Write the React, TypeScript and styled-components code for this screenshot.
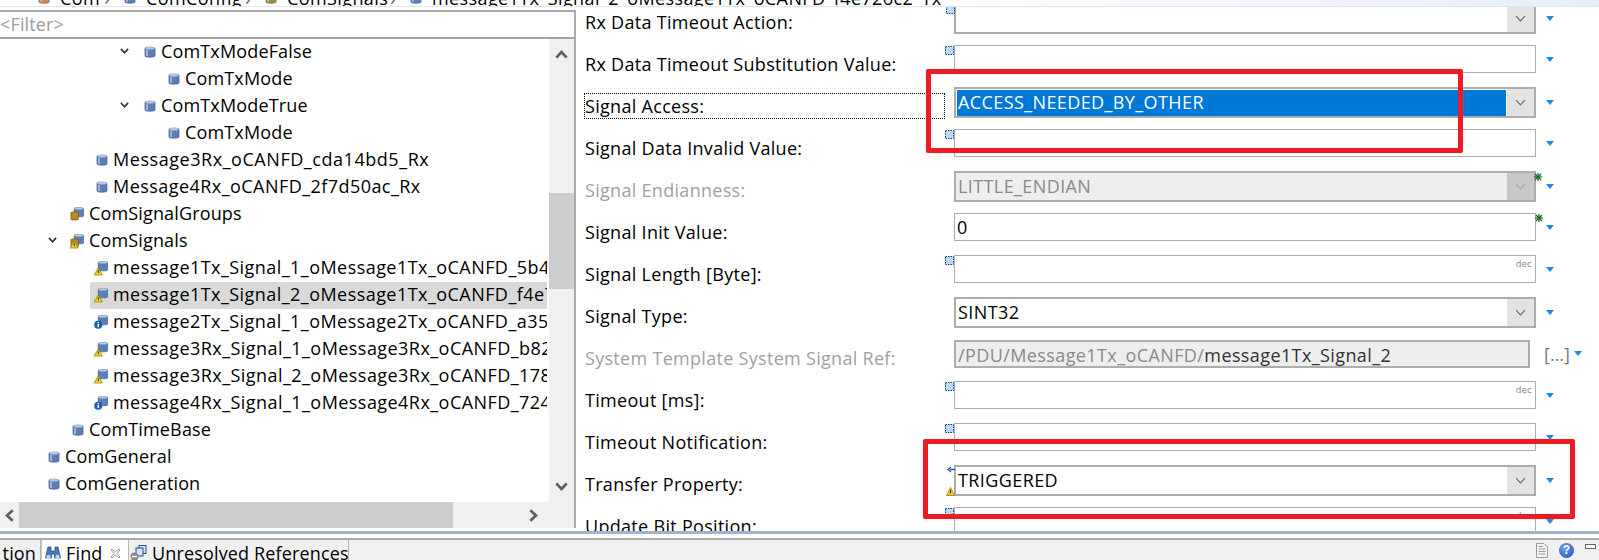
import React from 'react';
import styled, { createGlobalStyle } from 'styled-components';

const GlobalStyle = createGlobalStyle`
  html, body { margin: 0; padding: 0; background: #fff; }
  body { font-family: "Open Sans", "Noto Sans", "Liberation Sans", sans-serif; color: #000; }
  svg { flex-shrink: 0; }
`;

const Page = styled.div`
  position: relative;
  width: 1599px;
  height: 560px;
  overflow: hidden;
  display: flex;
  flex-direction: column;
  background: #fff;
  font-size: 18px;
  letter-spacing: 0.15px;
`;

const Crumbs = styled.div`
  height: 7px;
  flex: none;
  overflow: hidden;
  padding-left: 38px;
  background: linear-gradient(90deg, #fff 58%, #e8eef8);
  border-bottom: 1px solid #dfe6f0;
  box-sizing: border-box;
  display: flex;
  align-items: flex-end;
  white-space: nowrap;
  letter-spacing: 0.4px;
`;

const CrumbItem = styled.div<{ $width: number }>`
  width: ${(p) => p.$width}px;
  flex: none;
  display: flex;
  align-items: center;
  height: 24px;
  margin-bottom: -4px;
  line-height: 24px;
`;

const CrumbIcon = styled.div`
  width: 22px;
  flex: none;
  display: flex;
`;

const CrumbArrow = styled.span`
  margin-left: auto;
  margin-right: 14px;
  color: #555;
`;

const Workspace = styled.div`
  height: 524px;
  flex: none;
  display: flex;
  overflow: hidden;
`;

const LeftPanel = styled.div`
  width: 576px;
  height: 518px;
  flex: none;
  margin-top: 3px;
  box-sizing: border-box;
  border-top: 2px solid #ababab;
  border-right: 2px solid #ababab;
  border-bottom: 1px solid #ababab;
  display: flex;
  flex-direction: column;
`;

const FilterBox = styled.div`
  height: 25px;
  flex: none;
  line-height: 24px;
  color: #9a9a9a;
  border-bottom: 2px solid #a3a3a3;
`;

const TreeArea = styled.div`
  height: 463px;
  flex: none;
  display: flex;
`;

const Tree = styled.div`
  width: 549px;
  flex: none;
  overflow: hidden;
`;

const TreeRow = styled.div<{ $level: number }>`
  height: 27px;
  display: flex;
  align-items: center;
  padding-left: ${(p) => p.$level * 24 - 6}px;
`;

const Twist = styled.div`
  width: 20px;
  margin-right: 4px;
  padding-bottom: 2px;
  flex: none;
  display: flex;
  justify-content: center;
`;

const TreeItem = styled.div<{ $selected?: boolean }>`
  flex: 1;
  min-width: 0;
  height: 27px;
  margin-right: 2px;
  display: flex;
  align-items: center;
  overflow: hidden;
  white-space: nowrap;
  box-sizing: border-box;
  padding: 0 0 2px 3px;
  line-height: 24px;
  background: ${(p) => (p.$selected ? '#d9d9d9' : 'transparent')};
`;

const TreeIconSlot = styled.div`
  width: 20px;
  flex: none;
  display: flex;
  justify-content: center;
  padding-right: 3px;
  box-sizing: border-box;
`;

const TreeText = styled.span<{ $spacing?: number }>`
  position: relative;
  top: -1px;
  letter-spacing: ${(p) => p.$spacing ?? 0.15}px;
`;

const VScroll = styled.div`
  width: 25px;
  flex: none;
  background: #f0f0f0;
  display: flex;
  flex-direction: column;
  align-items: center;
`;

const VArrow = styled.div<{ $gap?: number }>`
  height: 30px;
  display: flex;
  align-items: center;
  justify-content: center;
  margin-top: ${(p) => p.$gap ?? 0}px;
`;

const VThumb = styled.div`
  width: 25px;
  height: 96px;
  margin-top: 124px;
  background: #cdcdcd;
`;

const HScroll = styled.div`
  height: 26px;
  flex: none;
  background: #f0f0f0;
  display: flex;
  align-items: center;
`;

const HArrow = styled.div<{ $width: number }>`
  width: ${(p) => p.$width}px;
  flex: none;
  display: flex;
  justify-content: center;
`;

const HThumb = styled.div`
  width: 434px;
  height: 26px;
  flex: none;
  background: #cdcdcd;
`;

const Form = styled.div`
  flex: 1;
  min-width: 0;
  padding-left: 9px;
  margin-top: -4px;
`;

const FormRow = styled.div`
  height: 42px;
  display: flex;
  align-items: flex-start;
`;

const FieldLabel = styled.div<{ $disabled?: boolean; $focused?: boolean }>`
  width: 359px;
  height: 24px;
  margin-top: 7px;
  margin-right: 10px;
  flex: none;
  line-height: 24px;
  box-sizing: border-box;
  white-space: nowrap;
  letter-spacing: 0.3px;
  color: ${(p) => (p.$disabled ? '#a0a0a0' : '#000')};
  outline: ${(p) => (p.$focused ? '1px dotted #000' : 'none')};
`;

const FieldCell = styled.div`
  display: flex;
  align-items: center;
  flex: none;
`;

const FieldBox = styled.div<{ $combo?: boolean; $disabled?: boolean; $short?: boolean }>`
  position: relative;
  width: ${(p) => (p.$short ? 576 : 582)}px;
  height: ${(p) => (p.$combo ? 31 : 28)}px;
  margin-top: ${(p) => (p.$short ? 1 : 0)}px;
  box-sizing: border-box;
  border: ${(p) => (p.$combo || p.$disabled ? '2px' : '1px')} solid #adadad;
  background: ${(p) => (p.$disabled ? '#eeeeee' : '#fff')};
  display: flex;
`;

const FieldText = styled.div<{ $selected?: boolean; $disabled?: boolean }>`
  flex: 1;
  min-width: 0;
  margin: 1px 1px 0;
  padding-left: 1px;
  line-height: 25px;
  white-space: nowrap;
  letter-spacing: 0.4px;
  background: ${(p) => (p.$selected ? '#0078d7' : 'transparent')};
  color: ${(p) => (p.$selected ? '#fff' : p.$disabled ? '#8a8a8a' : '#000')};
`;

const RefTail = styled.span`
  color: #333;
`;

const DropButton = styled.div<{ $disabled?: boolean }>`
  width: 27px;
  flex: none;
  background: ${(p) => (p.$disabled ? '#c8c8c8' : '#e3e3e3')};
  display: flex;
  align-items: center;
  justify-content: center;
`;

const DecHint = styled.span`
  position: absolute;
  right: 3px;
  top: 3px;
  font-size: 9px;
  line-height: 10px;
  letter-spacing: 0;
  color: #8a8a8a;
  font-family: "DejaVu Sans", sans-serif;
`;

const Corner = styled.div<{ $side: 'marker' | 'star' | 'warn' | 'arrow' }>`
  position: absolute;
  display: flex;
  ${(p) => p.$side === 'marker' && 'left: -10px; top: 0;'}
  ${(p) => p.$side === 'star' && 'right: -8px; top: 0;'}
  ${(p) => p.$side === 'warn' && 'left: -10px; bottom: -2px;'}
  ${(p) => p.$side === 'arrow' && 'left: -9px; top: -1px;'}
`;

const Browse = styled.div`
  width: 24px;
  margin-left: 14px;
  flex: none;
  text-align: center;
  line-height: 26px;
  letter-spacing: 0;
  color: #777;
`;

const RowMenu = styled.div<{ $gap: number }>`
  margin-left: ${(p) => p.$gap}px;
  flex: none;
  display: flex;
`;

const Separator = styled.div`
  height: 7px;
  flex: none;
  background: #fff;
  border-top: 3px solid #9db5cf;
  box-sizing: border-box;
`;

const TabBar = styled.div`
  flex: 1;
  min-height: 0;
  background: #f0f0f0;
  border-top: 2px solid #ababab;
  display: flex;
  overflow: hidden;
`;

const Tab = styled.div<{ $active?: boolean; $width: number }>`
  width: ${(p) => p.$width}px;
  flex: none;
  box-sizing: border-box;
  height: 26px;
  display: flex;
  align-items: center;
  gap: 4px;
  padding: 0 1px;
  white-space: nowrap;
  line-height: 24px;
  background: ${(p) => (p.$active ? '#fff' : '#f0f0f0')};
  border-right: 1px solid #b5b5b5;
  border-left: ${(p) => (p.$active ? '1px solid #c8c8c8' : 'none')};
`;

const TabClipped = styled(Tab)`
  justify-content: flex-end;
  padding-right: 4px;
`;

const FindIcon = styled.div`
  display: flex;
  margin-left: 2px;
  margin-right: 1px;
`;

const TabClose = styled.div`
  display: flex;
  margin-left: auto;
  margin-right: 6px;
`;

const StatusIcons = styled.div`
  margin-left: auto;
  display: flex;
  align-items: flex-start;
  gap: 11px;
  padding: 3px 3px 0 0;
`;

const HelpBall = styled.div`
  width: 15px;
  height: 15px;
  border-radius: 50%;
  background: radial-gradient(circle at 40% 35%, #6f9df0, #1f48c0);
  color: #fff;
  font-size: 12px;
  font-weight: 700;
  line-height: 15px;
  text-align: center;
  font-family: "Liberation Sans", sans-serif;
`;

const MinBox = styled.div`
  width: 9px;
  height: 3px;
  margin-top: 1px;
  border: 1px solid #666;
  background: #fff;
`;

const RedFrame = styled.div<{ $x: number; $y: number; $w: number; $h: number }>`
  position: absolute;
  left: ${(p) => p.$x}px;
  top: ${(p) => p.$y}px;
  width: ${(p) => p.$w}px;
  height: ${(p) => p.$h}px;
  box-sizing: border-box;
  border: 5px solid #ed1c24;
  border-radius: 2px;
  box-shadow: 0 0 1px #f8b0b4;
  pointer-events: none;
`;

function Chevron({ size = 10, color = '#444', width = 1.6 }: { size?: number; color?: string; width?: number }) {
  return (
    <svg width={size} height={size * 0.7} viewBox="0 0 10 7">
      <polyline points="1,1 5,5.4 9,1" fill="none" stroke={color} strokeWidth={width} />
    </svg>
  );
}

function Cylinder({ color = '#5b7fb5' }: { color?: string }) {
  return (
    <svg width="12" height="12" viewBox="0 0 11 12">
      <path d="M.5 2.2C.5 .8 10.5 .8 10.5 2.2V10C10.5 11.6 .5 11.6 .5 10Z" fill={color} stroke="#44608c" strokeWidth=".7" />
      <ellipse cx="5.5" cy="2.2" rx="4.6" ry="1.3" fill="#b9cbe4" />
      <rect x="1.5" y="4" width="2" height="6" fill="#9db5d8" />
    </svg>
  );
}

type IconKind = 'plain' | 'warn' | 'info' | 'group' | 'groupWarn';

function NodeIcon({ kind }: { kind: IconKind }) {
  if (kind === 'plain') return <Cylinder />;
  const group = kind === 'group' || kind === 'groupWarn';
  return (
    <svg width="15" height="16" viewBox="0 0 16 16">
      <g transform="translate(4 0)">
        <path d="M.5 2C.5 .8 10.5 .8 10.5 2V10C10.5 11.4 .5 11.4 .5 10Z" fill="#5b7fb5" stroke="#44608c" strokeWidth=".7" />
        <ellipse cx="5.5" cy="2" rx="4.6" ry="1.2" fill="#b9cbe4" />
      </g>
      {group && (
        <path d="M1 6.5C1 5.4 9 5.4 9 6.5V13.5C9 14.8 1 14.8 1 13.5Z" fill="#b8862b" stroke="#7a5510" strokeWidth=".7" />
      )}
      {(kind === 'warn' || kind === 'groupWarn') && (
        <g>
          <path d="M4.5 8L9 15.5H0Z" fill="#f3d21c" stroke="#8a7400" strokeWidth=".7" />
          <rect x="4" y="10.5" width="1.1" height="3" fill="#333" />
        </g>
      )}
      {kind === 'info' && (
        <g>
          <circle cx="4.5" cy="11" r="4.3" fill="#1a5fb4" />
          <rect x="3.8" y="10" width="1.5" height="3.5" fill="#fff" />
          <rect x="3.8" y="8" width="1.5" height="1.3" fill="#fff" />
        </g>
      )}
    </svg>
  );
}

function MarkerIcon() {
  return (
    <svg width="9" height="9" viewBox="0 0 9 9">
      <rect x=".5" y=".5" width="8" height="8" fill="#bcd7f7" stroke="#123f80" strokeDasharray="1.5 1" />
    </svg>
  );
}

function StarIcon() {
  return (
    <svg width="8" height="8" viewBox="0 0 8 8" stroke="#0f6b1c" strokeWidth="1.2">
      <line x1="4" y1="0" x2="4" y2="8" />
      <line x1="0" y1="4" x2="8" y2="4" />
      <line x1="1" y1="1" x2="7" y2="7" />
      <line x1="7" y1="1" x2="1" y2="7" />
    </svg>
  );
}

function WarnIcon() {
  return (
    <svg width="9" height="9" viewBox="0 0 9 9">
      <path d="M4.5 .5L8.5 8.5H.5Z" fill="#f3d21c" stroke="#8a7400" strokeWidth=".7" />
      <rect x="4" y="3" width="1" height="3.5" fill="#333" />
    </svg>
  );
}

function ArrowIcon() {
  return (
    <svg width="9" height="7" viewBox="0 0 9 7">
      <path d="M8 3.5H3M4 1L1 3.5L4 6" fill="none" stroke="#2a5ca8" strokeWidth="1.4" />
    </svg>
  );
}

function MenuTriangle() {
  return (
    <svg width="8" height="5" viewBox="0 0 8 5">
      <path d="M0 0H8L4 5Z" fill="#1e88e5" />
    </svg>
  );
}

function Binoculars() {
  return (
    <svg width="16" height="14" viewBox="0 0 16 14">
      <path d="M3 1H6V5H10V1H13L15.5 12H9.5V8H6.5V12H.5Z" fill="#4a78b5" stroke="#2b4f85" strokeWidth=".8" />
      <circle cx="3.5" cy="11" r="2.2" fill="#c4d6ee" />
      <circle cx="12.5" cy="11" r="2.2" fill="#c4d6ee" />
    </svg>
  );
}

function CloseGlyph() {
  return (
    <svg width="11" height="11" viewBox="0 0 11 11">
      <path d="M2 1L5.5 4L9 1L10 2L7 5.5L10 9L9 10L5.5 7L2 10L1 9L4 5.5L1 2Z" fill="#fff" stroke="#8f8f8f" strokeWidth=".9" />
    </svg>
  );
}

function UnresolvedIcon() {
  return (
    <svg width="18" height="16" viewBox="0 0 18 16">
      <rect x="9" y=".5" width="7" height="8" fill="#dbe6f5" stroke="#234f90" />
      <rect x="6" y="3" width="7" height="8" fill="#dbe6f5" stroke="#234f90" />
      <circle cx="4.5" cy="11.5" r="4" fill="#8a8a8a" />
      <rect x="2" y="10.8" width="5" height="1.5" fill="#fff" />
    </svg>
  );
}

function DocIcon() {
  return (
    <svg width="12" height="15" viewBox="0 0 12 15">
      <path d="M.5 .5H8L11.5 4V14.5H.5Z" fill="#f4f4f4" stroke="#9a9a9a" />
      <path d="M2.5 6H9.5M2.5 8.5H9.5M2.5 11H9.5M2.5 3.5H7" stroke="#9a9a9a" />
    </svg>
  );
}

type TreeNode = { level: number; text: string; icon: IconKind; open?: boolean; selected?: boolean; spacing?: number };

const treeNodes: TreeNode[] = [
  { level: 5, text: 'ComTxModeFalse', icon: 'plain', open: true },
  { level: 6, text: 'ComTxMode', icon: 'plain' },
  { level: 5, text: 'ComTxModeTrue', icon: 'plain', open: true },
  { level: 6, text: 'ComTxMode', icon: 'plain' },
  { level: 3, text: 'Message3Rx_oCANFD_cda14bd5_Rx', icon: 'plain', spacing: 0.55 },
  { level: 3, text: 'Message4Rx_oCANFD_2f7d50ac_Rx', icon: 'plain', spacing: 0.45 },
  { level: 2, text: 'ComSignalGroups', icon: 'group' },
  { level: 2, text: 'ComSignals', icon: 'groupWarn', open: true },
  { level: 3, text: 'message1Tx_Signal_1_oMessage1Tx_oCANFD_5b4', icon: 'warn', spacing: 0.45 },
  { level: 3, text: 'message1Tx_Signal_2_oMessage1Tx_oCANFD_f4e726c2_Tx', icon: 'warn', selected: true, spacing: 0.45 },
  { level: 3, text: 'message2Tx_Signal_1_oMessage2Tx_oCANFD_a35', icon: 'info', spacing: 0.45 },
  { level: 3, text: 'message3Rx_Signal_1_oMessage3Rx_oCANFD_b82', icon: 'warn', spacing: 0.45 },
  { level: 3, text: 'message3Rx_Signal_2_oMessage3Rx_oCANFD_178', icon: 'warn', spacing: 0.45 },
  { level: 3, text: 'message4Rx_Signal_1_oMessage4Rx_oCANFD_724', icon: 'info', spacing: 0.45 },
  { level: 2, text: 'ComTimeBase', icon: 'plain' },
  { level: 1, text: 'ComGeneral', icon: 'plain' },
  { level: 1, text: 'ComGeneration', icon: 'plain' },
];

type Field = {
  label: string;
  combo?: boolean;
  value?: string;
  tail?: string;
  disabled?: boolean;
  selected?: boolean;
  focused?: boolean;
  marker?: boolean;
  star?: boolean;
  dec?: boolean;
  flagged?: boolean;
  browse?: boolean;
};

const fields: Field[] = [
  { label: 'Rx Data Timeout Action:', combo: true, marker: true },
  { label: 'Rx Data Timeout Substitution Value:', marker: true },
  { label: 'Signal Access:', combo: true, value: 'ACCESS_NEEDED_BY_OTHER', selected: true, focused: true },
  { label: 'Signal Data Invalid Value:', marker: true },
  { label: 'Signal Endianness:', combo: true, value: 'LITTLE_ENDIAN', disabled: true, star: true },
  { label: 'Signal Init Value:', value: '0', star: true },
  { label: 'Signal Length [Byte]:', marker: true, dec: true },
  { label: 'Signal Type:', combo: true, value: 'SINT32' },
  {
    label: 'System Template System Signal Ref:',
    value: '/PDU/Message1Tx_oCANFD/',
    tail: 'message1Tx_Signal_2',
    disabled: true,
    browse: true,
  },
  { label: 'Timeout [ms]:', marker: true, dec: true },
  { label: 'Timeout Notification:', marker: true },
  { label: 'Transfer Property:', combo: true, value: 'TRIGGERED', flagged: true },
  { label: 'Update Bit Position:', marker: true, dec: true },
];

const crumbs = [
  { text: 'Com', width: 86, color: '#e8823a', arrow: true },
  { text: 'ComConfig', width: 141, color: '#5b7fb5', arrow: true },
  { text: 'ComSignals', width: 145, color: '#b8862b', arrow: true },
  { text: 'message1Tx_Signal_2_oMessage1Tx_oCANFD_f4e726c2_Tx', width: 560, color: '#5b7fb5', arrow: false },
];

function FormField({ field }: { field: Field }) {
  return (
    <FormRow>
      <FieldLabel $disabled={field.disabled} $focused={field.focused}>
        {field.label}
      </FieldLabel>
      <FieldCell>
        <FieldBox $combo={field.combo} $disabled={field.disabled} $short={field.browse}>
          {field.marker && (
            <Corner $side="marker">
              <MarkerIcon />
            </Corner>
          )}
          {field.star && (
            <Corner $side="star">
              <StarIcon />
            </Corner>
          )}
          {field.flagged && (
            <>
              <Corner $side="arrow">
                <ArrowIcon />
              </Corner>
              <Corner $side="warn">
                <WarnIcon />
              </Corner>
            </>
          )}
          <FieldText $selected={field.selected} $disabled={field.disabled}>
            {field.value}
            {field.tail && <RefTail>{field.tail}</RefTail>}
          </FieldText>
          {field.dec && <DecHint>dec</DecHint>}
          {field.combo && (
            <DropButton $disabled={field.disabled}>
              <Chevron size={11} color={field.disabled ? '#a8a8a8' : '#6a6a6a'} width={1.1} />
            </DropButton>
          )}
        </FieldBox>
        {field.browse && <Browse>[...]</Browse>}
        <RowMenu $gap={field.browse ? 6 : 10}>
          <MenuTriangle />
        </RowMenu>
      </FieldCell>
    </FormRow>
  );
}

export default function App() {
  return (
    <Page>
      <GlobalStyle />
      <Crumbs>
        {crumbs.map((c) => (
          <CrumbItem key={c.text} $width={c.width}>
            <CrumbIcon>
              <Cylinder color={c.color} />
            </CrumbIcon>
            {c.text}
            {c.arrow && <CrumbArrow>›</CrumbArrow>}
          </CrumbItem>
        ))}
      </Crumbs>
      <Workspace>
        <LeftPanel>
          <FilterBox>&lt;Filter&gt;</FilterBox>
          <TreeArea>
            <Tree>
              {treeNodes.map((n, i) => (
                <TreeRow key={i} $level={n.level}>
                  <Twist>{n.open && <Chevron size={9} color="#333" width={1.8} />}</Twist>
                  <TreeItem $selected={n.selected}>
                    <TreeIconSlot>
                      <NodeIcon kind={n.icon} />
                    </TreeIconSlot>
                    <TreeText $spacing={n.spacing}>{n.text}</TreeText>
                  </TreeItem>
                </TreeRow>
              ))}
            </Tree>
            <VScroll>
              <VArrow>
                <svg width="13" height="9" viewBox="0 0 10 7">
                  <polyline points="1,6 5,1.6 9,6" fill="none" stroke="#606060" strokeWidth="2.1" />
                </svg>
              </VArrow>
              <VThumb />
              <VArrow $gap={183}>
                <Chevron size={13} color="#606060" width={2.1} />
              </VArrow>
            </VScroll>
          </TreeArea>
          <HScroll>
            <HArrow $width={19}>
              <svg width="9" height="13" viewBox="0 0 7 10">
                <polyline points="6,1 1.6,5 6,9" fill="none" stroke="#606060" strokeWidth="2.1" />
              </svg>
            </HArrow>
            <HThumb />
            <HArrow $width={161}>
              <svg width="9" height="13" viewBox="0 0 7 10">
                <polyline points="1,1 5.4,5 1,9" fill="none" stroke="#606060" strokeWidth="2.1" />
              </svg>
            </HArrow>
          </HScroll>
        </LeftPanel>
        <Form>
          {fields.map((f) => (
            <FormField key={f.label} field={f} />
          ))}
        </Form>
      </Workspace>
      <Separator />
      <TabBar>
        <TabClipped $width={41}>tion</TabClipped>
        <Tab $active $width={88}>
          <FindIcon>
            <Binoculars />
          </FindIcon>
          Find
          <TabClose>
            <CloseGlyph />
          </TabClose>
        </Tab>
        <Tab $width={220}>
          <UnresolvedIcon />
          Unresolved References
        </Tab>
        <StatusIcons>
          <DocIcon />
          <HelpBall>?</HelpBall>
          <MinBox />
        </StatusIcons>
      </TabBar>
      <RedFrame $x={926} $y={69} $w={537} $h={84} />
      <RedFrame $x={923} $y={439} $w={652} $h={80} />
    </Page>
  );
}
